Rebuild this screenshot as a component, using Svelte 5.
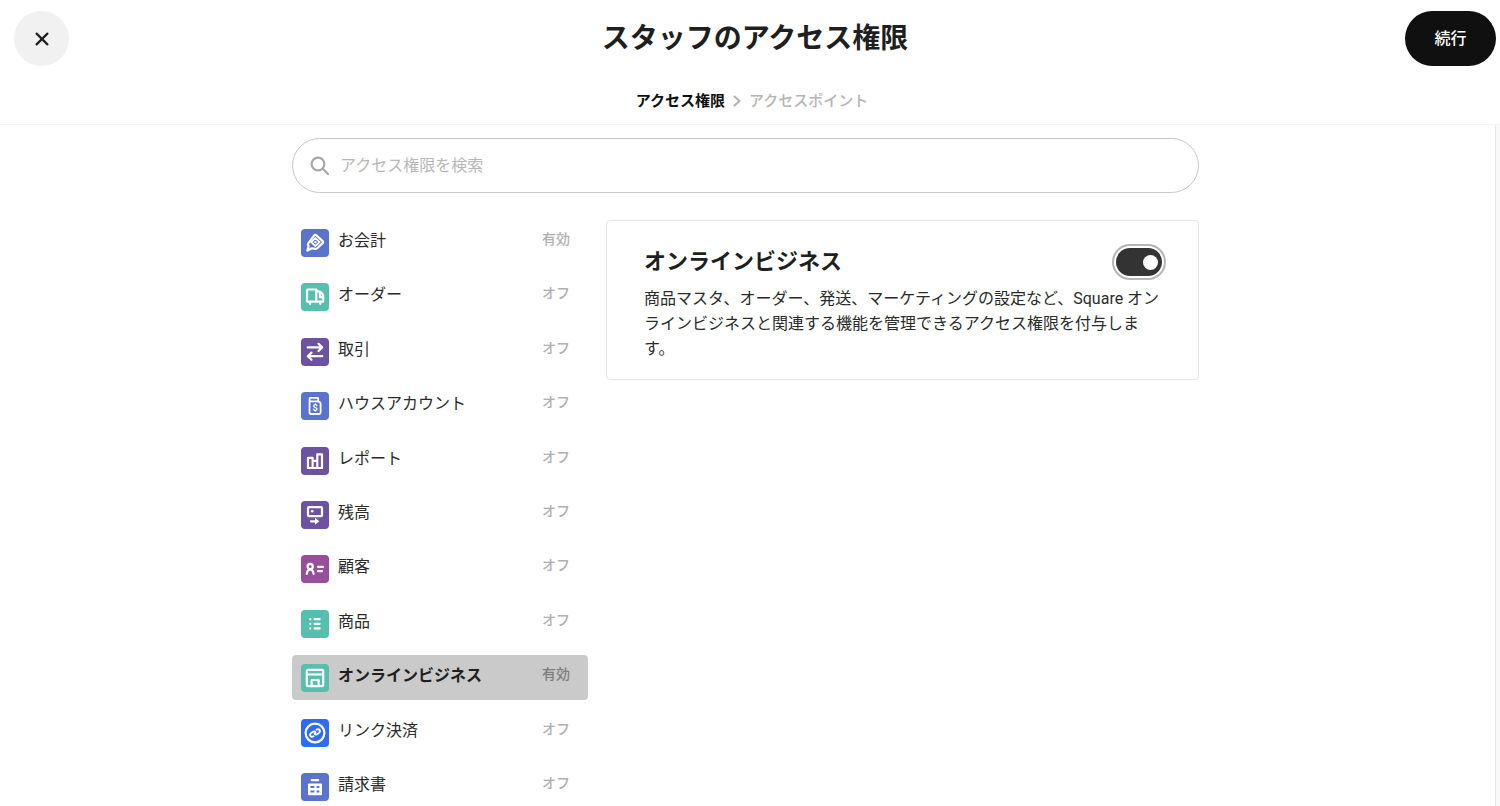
<script lang="ts">
	type Permission = {
		id: string;
		label: string;
		color: string;
		enabled: boolean;
	};

	let permissions: Permission[] = $state([
		{ id: 'checkout', label: 'お会計', color: 'blue', enabled: true },
		{ id: 'orders', label: 'オーダー', color: 'teal', enabled: false },
		{ id: 'transactions', label: '取引', color: 'purple', enabled: false },
		{ id: 'house', label: 'ハウスアカウント', color: 'blue', enabled: false },
		{ id: 'reports', label: 'レポート', color: 'purple', enabled: false },
		{ id: 'balance', label: '残高', color: 'purple', enabled: false },
		{ id: 'customers', label: '顧客', color: 'magenta', enabled: false },
		{ id: 'items', label: '商品', color: 'teal', enabled: false },
		{ id: 'online', label: 'オンラインビジネス', color: 'teal', enabled: true },
		{ id: 'links', label: 'リンク決済', color: 'bright', enabled: false },
		{ id: 'invoices', label: '請求書', color: 'blue', enabled: false }
	]);

	let selected = $state('online');
	let query = $state('');

	const shown = $derived(permissions.filter((p) => p.label.includes(query.trim())));
	const current = $derived(permissions.find((p) => p.id === selected)!);
</script>

<svelte:head>
	<title>スタッフのアクセス権限</title>
</svelte:head>

<div class="page">
	<header class="header">
		<div class="bar">
			<button class="close" type="button" aria-label="閉じる">
				<svg width="16" height="16" viewBox="0 0 16 16" aria-hidden="true">
					<path d="M2.6 2.6l10.8 10.8M13.4 2.6L2.6 13.4" />
				</svg>
			</button>
			<h1>スタッフのアクセス権限</h1>
			<button class="continue" type="button">続行</button>
		</div>

		<nav class="steps">
			<span class="step active" aria-current="step">アクセス権限</span>
			<svg width="8" height="12" viewBox="0 0 8 12" aria-hidden="true">
				<path d="M1.5 1.5L6.5 6l-5 4.5" />
			</svg>
			<span class="step">アクセスポイント</span>
		</nav>
	</header>

	<div class="body">
		<main class="content">
			<label class="search">
				<svg width="20" height="20" viewBox="0 0 20 20" aria-hidden="true">
					<circle cx="8" cy="8" r="6.4" />
					<path d="M13 13l5 5" />
				</svg>
				<input type="search" placeholder="アクセス権限を検索" aria-label="アクセス権限を検索" bind:value={query} />
			</label>

			<div class="columns">
				<ul class="list">
					{#each shown as p (p.id)}
						<li>
							<button
								class="row"
								class:selected={p.id === selected}
								type="button"
								onclick={() => (selected = p.id)}
							>
								<svg class="icon {p.color}" width="28" height="28" viewBox="0 0 28 28" aria-hidden="true">
									{#if p.id === 'checkout'}
										<path d="M13.3 6.3q1-.9 2 0l6.3 5.8q1 1 0 2l-5.4 5.2q-1 .9-2.2.6l-3-.7-4.6 2.3 1.2-4.3q-1.2-1.6-.2-3.1z" />
										<path class="thin" d="M14.4 9.2l4.2 3.9-4.2 3.9-4.2-3.9z" />
										<circle class="solid" cx="14.4" cy="13.1" r="1.2" />
									{:else if p.id === 'orders'}
										<path d="M6 18.6V7.2q0-.7.7-.7h8.6v12.1zM15.3 8.4h2.2q4.7.6 4.7 6v4.2h-6.9" />
										<path d="M19 10.4v3.8h2.6M9 19v1.8M19.3 19v1.8" />
									{:else if p.id === 'transactions'}
										<path d="M6.7 9.4h14M17.5 5.8l3.7 3.6-3.7 3.6M21.3 18.2h-14M10.5 14.6l-3.7 3.6 3.7 3.6" />
									{:else if p.id === 'house'}
										<path class="thin" d="M9.2 5.8h7.4q.6 0 .6.6v2.9H8.6V6.4q0-.6.6-.6zM8.6 9.3h8.6q2.4.6 2.4 2.7v8.5q0 1.5-1.5 1.5H10q-1.5 0-1.5-1.5z" />
										<text x="14" y="18.8">$</text>
									{:else if p.id === 'reports'}
										<path d="M7 21V10.8h4.6V21zM11.6 13.8h4.7M16.3 21V7.3H21V21z" />
										<path d="M7 21h14" />
									{:else if p.id === 'balance'}
										<path d="M8 6.2h12q1 0 1 1v7q0 1-1 1H8q-1 0-1-1v-7q0-1 1-1z" />
										<circle class="solid" cx="11.2" cy="10.3" r="1.3" />
										<path d="M10 20.3h4.5" />
										<path class="solid" d="M14 16.8l4.3 3.5-4.3 3.5z" />
									{:else if p.id === 'customers'}
										<circle cx="9.2" cy="11.4" r="2.6" />
										<path d="M5.8 19q.3-4 3.4-4.6 3.1.6 3.4 4.6M17 11.8h5M17 16.2h4" />
									{:else if p.id === 'items'}
										<path d="M9.2 9.2h.2M9.2 13.8h.2M9.2 18.4h.2M13.6 9.2h5M13.6 13.8h5M13.6 18.4h5" />
									{:else if p.id === 'online'}
										<path d="M7 5.9h14q1.2 0 1.2 1.2v13.8q0 1.2-1.2 1.2H7q-1.2 0-1.2-1.2V7.1q0-1.2 1.2-1.2zM6 10.5h16M10.6 22v-6h7v6" />
									{:else if p.id === 'links'}
										<circle cx="14" cy="14" r="9.4" />
										<path class="thin" d="M12.6 17.2q-2 1.3-3.2-.2-1-1.6.7-2.9l1.4-1.1q1.7-1.2 3 .3M15.4 10.8q2-1.3 3.2.2 1 1.6-.7 2.9l-1.4 1.1q-1.7 1.2-3-.3" />
									{:else}
										<path d="M10.8 7.2h6.4" />
										<path class="solid" fill-rule="evenodd" d="M8 10.4h12q1 0 1 1v9.8q0 1-1 1H8q-1 0-1-1v-9.8q0-1 1-1zM9.4 13v2h4v-2zM15.6 13v2h2.8v-2zM9.4 17.4v2h4v-2zM15.6 17.4v2h2.8v-2z" />
									{/if}
								</svg>
								<span class="label">{p.label}</span>
								<span class="status">{p.enabled ? '有効' : 'オフ'}</span>
							</button>
						</li>
					{/each}
				</ul>

				<section class="card">
					<div class="card-head">
						<h2 id="card-title">{current.label}</h2>
						<input
							class="toggle"
							type="checkbox"
							role="switch"
							aria-labelledby="card-title"
							bind:checked={current.enabled}
						/>
					</div>
					<p>
						商品マスタ、オーダー、発送、マーケティングの設定など、Square オンラインビジネスと関連する機能を管理できるアクセス権限を付与します。
					</p>
				</section>
			</div>
		</main>
		<div class="track" aria-hidden="true"></div>
	</div>
</div>

<style>
	:global(body) {
		background: #fff;
	}

	.page {
		height: 100vh;
		display: flex;
		flex-direction: column;
		overflow: hidden;
		color: #1f1f1f;
		font-family: Roboto, 'Noto Sans CJK JP', sans-serif;
		font-size: 16px;
		line-height: 24px;
	}

	button,
	input {
		font: inherit;
		color: inherit;
	}

	button {
		border: 0;
		padding: 0;
		cursor: pointer;
	}

	svg {
		flex: none;
		fill: none;
		stroke: currentColor;
		stroke-width: 2.2;
		stroke-linecap: round;
		stroke-linejoin: round;
	}

	.header {
		flex: none;
		padding-bottom: 11px;
		border-bottom: 1px solid #f4f4f4;
	}

	.bar {
		display: grid;
		grid-template-columns: 1fr auto 1fr;
		align-items: center;
		padding: 11px 4px 0 14px;
	}

	.close {
		display: grid;
		place-items: center;
		width: 55px;
		height: 55px;
		border-radius: 50%;
		background: #f1f1f1;
	}

	h1 {
		margin: 0;
		font-size: 28px;
		line-height: 40px;
		font-weight: 700;
	}

	.continue {
		justify-self: end;
		width: 91px;
		height: 55px;
		border-radius: 28px;
		background: #101010;
		color: #fff;
		font-weight: 500;
	}

	.steps {
		display: flex;
		justify-content: center;
		align-items: center;
		gap: 8px;
		margin-top: 23px;
		padding-left: 4px;
		font-size: 15px;
		color: #b5b5b5;
	}

	.step {
		font-weight: 500;
	}

	.step.active {
		color: #101010;
		font-weight: 700;
	}

	.body {
		flex: 1;
		min-height: 0;
		display: flex;
	}

	.content {
		flex: 1;
		overflow: hidden;
		padding: 13px 18px 0 14px;
	}

	.track {
		width: 4px;
		border-left: 1px solid #e8e8e8;
		background: #f9f9f9;
	}

	.search,
	.columns {
		max-width: 907px;
		margin: 0 auto;
	}

	.search {
		box-sizing: border-box;
		display: flex;
		align-items: center;
		gap: 10px;
		height: 55px;
		padding: 0 18px 0 17px;
		border: 1px solid #c8c8c8;
		border-radius: 28px;
		color: #a8a8a8;
	}

	.search input {
		flex: 1;
		padding: 0;
		border: 0;
		outline: 0;
		background: none;
		color: #1f1f1f;
		appearance: none;
	}

	.search input::placeholder {
		color: #b8b8b8;
		opacity: 1;
	}

	.columns {
		display: grid;
		grid-template-columns: 296px 1fr;
		align-items: start;
		gap: 18px;
		margin-top: 27px;
	}

	.list {
		display: flex;
		flex-direction: column;
		justify-content: space-between;
		gap: 9px;
		min-height: 589px;
		margin: 0;
		padding: 0;
		list-style: none;
	}

	.row {
		display: flex;
		align-items: flex-start;
		gap: 9px;
		width: 100%;
		height: 45px;
		padding: 9px 18px 0 9px;
		border-radius: 4px;
		background: none;
		text-align: left;
	}

	.row.selected {
		background: #cacaca;
	}

	.icon {
		border-radius: 4px;
		color: #fff;
	}

	.thin {
		stroke-width: 1.8;
	}

	.solid {
		fill: #fff;
		stroke: none;
	}

	.icon text {
		fill: #fff;
		stroke: none;
		font-size: 9px;
		font-weight: 700;
		text-anchor: middle;
	}

	.blue {
		background: #5a73cb;
	}

	.teal {
		background: #57bfae;
	}

	.purple {
		background: #6d529f;
	}

	.magenta {
		background: #984f9b;
	}

	.bright {
		background: #2f6cf6;
	}

	.label {
		flex: 1;
		color: #2b2b2b;
	}

	.selected .label {
		color: #1f1f1f;
		font-weight: 700;
	}

	.status {
		font-size: 14px;
		line-height: 20px;
		font-weight: 500;
		color: #b0b0b0;
	}

	.selected .status {
		color: #7c7c7c;
	}

	.card {
		padding: 27px 32px 18px 37px;
		border: 1px solid #e4e4e4;
		border-radius: 4px;
	}

	/* the switch keeps room for its outer ring */
	.card-head {
		display: flex;
		justify-content: space-between;
		align-items: center;
		margin-bottom: 10px;
		padding-right: 4px;
	}

	h2 {
		margin: 0;
		font-size: 22px;
		line-height: 28px;
		font-weight: 700;
	}

	.toggle {
		appearance: none;
		display: flex;
		align-items: center;
		box-sizing: border-box;
		width: 46px;
		height: 28px;
		margin: 0;
		padding: 0 4px;
		border-radius: 14px;
		background: #b5b5b5;
		outline: 2px solid #b5b5b5;
		outline-offset: 2px;
		cursor: pointer;
	}

	.toggle::before {
		content: '';
		width: 15px;
		height: 15px;
		border-radius: 50%;
		background: #fff;
	}

	.toggle:checked {
		justify-content: flex-end;
		background: #333;
	}

	.card p {
		margin: 0;
		line-height: 25px;
		color: #2b2b2b;
	}
</style>
